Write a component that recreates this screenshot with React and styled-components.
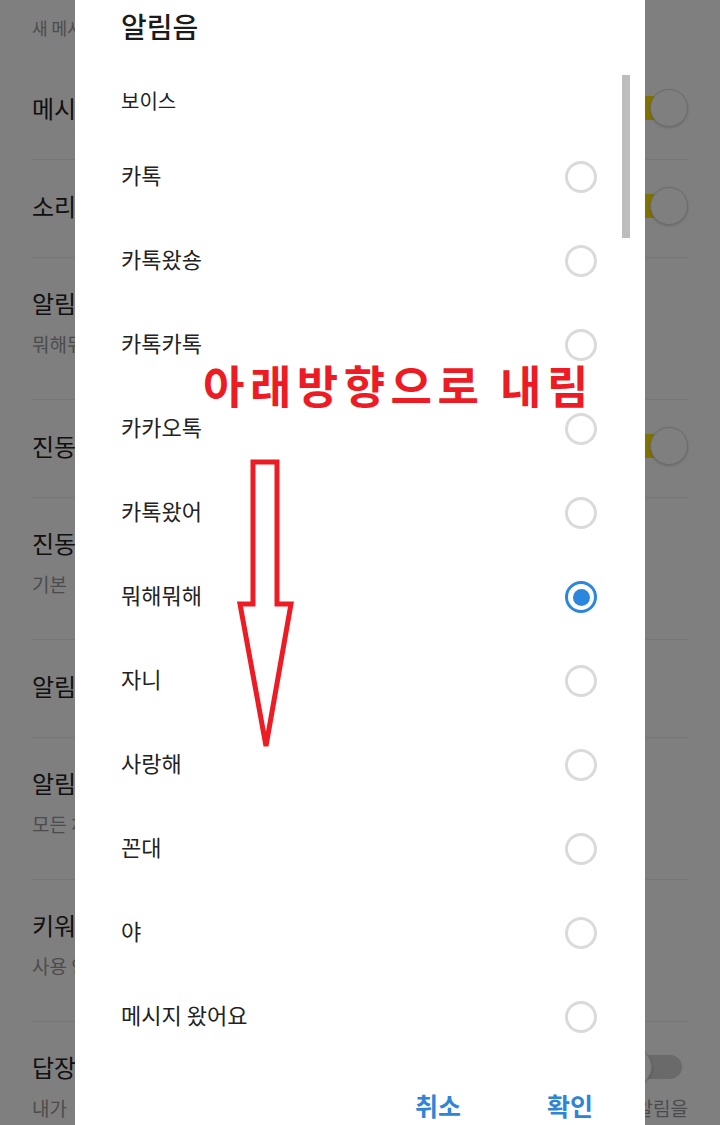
import React from 'react';
import styled, { createGlobalStyle } from 'styled-components';

const GlobalStyle = createGlobalStyle`
  html, body {
    margin: 0;
    padding: 0;
    overflow: hidden;
    background: #fff;
  }
  body {
    font-family: "Noto Sans CJK KR", "Noto Sans", sans-serif;
  }
`;

const Screen = styled.div`
  position: relative;
  width: 720px;
  height: 1125px;
  overflow: hidden;
  background: #fff;
`;

/* settings page behind the dialog */
const Settings = styled.div`
  display: flex;
  flex-direction: column;
`;

const SectionLabel = styled.div`
  box-sizing: border-box;
  height: 62px;
  padding: 14px 32px 0;
  font-size: 17px;
  line-height: 28px;
  color: #999;
`;

const SettingRow = styled.div`
  box-sizing: border-box;
  display: flex;
  flex-direction: column;
  height: ${(p) => (p.$tall ? 142 : 98)}px;
  margin: 0 32px;
  padding-top: ${(p) => (p.$tall ? 26 : 27)}px;
  border-bottom: 1px solid #ececec;
`;

const TopLine = styled.div`
  display: flex;
  align-items: center;
  justify-content: space-between;
  height: 38px;
`;

const RowTitle = styled.span`
  font-size: 24px;
  line-height: 34px;
  color: #222;
`;

const RowSub = styled.div`
  margin-top: 8px;
  font-size: 19px;
  line-height: 28px;
  color: #999;
  text-align: ${(p) => (p.$justify ? 'justify' : 'left')};
  word-break: keep-all;
`;

const Switch = styled.span`
  position: relative;
  width: 74px;
  height: 38px;
  flex-shrink: 0;
`;

const Track = styled.span`
  position: absolute;
  left: 6px;
  right: 6px;
  top: 7px;
  height: 24px;
  border-radius: 12px;
  background: ${(p) => (p.$on ? '#fee500' : '#d4d4d4')};
`;

const Thumb = styled.span`
  position: absolute;
  top: 0;
  left: ${(p) => (p.$on ? 36 : 0)}px;
  box-sizing: border-box;
  width: 38px;
  height: 38px;
  border-radius: 50%;
  background: #fff;
  border: 1px solid #d8d8d8;
  box-shadow: 0 1px 3px rgba(0, 0, 0, 0.18);
`;

const Backdrop = styled.div`
  position: absolute;
  inset: 0;
  background: rgba(0, 0, 0, 0.5);
`;

/* ringtone dialog */
const Dialog = styled.div`
  position: absolute;
  left: 75px;
  top: 0;
  width: 570px;
  display: flex;
  flex-direction: column;
  background: #fff;
`;

const DialogTitle = styled.h2`
  margin: 0;
  padding: 0 46px;
  height: 54px;
  line-height: 52px;
  font-size: 28px;
  font-weight: 500;
  color: #1b1b1b;
`;

const OptionList = styled.div`
  position: relative;
  height: 1005px;
  overflow: hidden;
  padding: 0 48px 0 46px;
`;

const GroupLabel = styled.div`
  padding: 34px 0 21px;
  font-size: 20px;
  line-height: 26px;
  color: #222;
`;

const Option = styled.label`
  display: flex;
  align-items: center;
  justify-content: space-between;
  height: 84px;
  font-size: 22px;
  color: #222;
`;

const OptionName = styled.span`
  margin-top: -6px;
`;

const Radio = styled.span`
  box-sizing: border-box;
  display: flex;
  align-items: center;
  justify-content: center;
  width: 32px;
  height: 32px;
  border-radius: 50%;
  border: 3px solid ${(p) => (p.$checked ? '#2b86de' : '#dadada')};

  &::after {
    content: '';
    display: ${(p) => (p.$checked ? 'block' : 'none')};
    width: 17px;
    height: 17px;
    border-radius: 50%;
    background: #2b86de;
  }
`;

const ScrollThumb = styled.div`
  position: absolute;
  right: 15px;
  top: 21px;
  width: 8px;
  height: 163px;
  background: #bdbdbd;
`;

const Footer = styled.div`
  display: flex;
  justify-content: flex-end;
  align-items: center;
  gap: 86px;
  height: 92px;
  padding-right: 52px;
`;

const FooterButton = styled.button`
  border: none;
  background: none;
  padding: 0;
  font-family: inherit;
  font-size: 25px;
  font-weight: 700;
  color: #2f84d6;
`;

/* red hand-drawn note on top */
const Note = styled.div`
  position: absolute;
  left: 203px;
  top: 362px;
  font-size: 45px;
  font-weight: 700;
  line-height: 46px;
  letter-spacing: 5.5px;
  color: #ed1c24;
  white-space: nowrap;
`;

const ArrowSvg = styled.svg`
  position: absolute;
  left: 230px;
  top: 450px;
`;

const rows = [
  { title: '메시지 알림', on: true },
  { title: '소리', on: true },
  { title: '알림음', sub: '뭐해뭐해' },
  { title: '진동', on: true },
  { title: '진동 패턴', sub: '기본' },
  { title: '알림 팝업' },
  { title: '알림 받을 채팅방', sub: '모든 채팅방' },
  { title: '키워드 알림', sub: '사용 안 함' },
  {
    title: '답장 알림',
    on: false,
    sub: '내가 보낸 메시지에 누군가 답장을 하면 채팅방 알림이 꺼져 있어도 답장 알림을 받습니다.',
    justify: true,
  },
];

const sounds = [
  '카톡',
  '카톡왔숑',
  '카톡카톡',
  '카카오톡',
  '카톡왔어',
  '뭐해뭐해',
  '자니',
  '사랑해',
  '꼰대',
  '야',
  '메시지 왔어요',
];

const App = () => {
  const selected = '뭐해뭐해';
  return (
    <Screen>
      <GlobalStyle />
      <Settings>
        <SectionLabel>새 메시지 알림</SectionLabel>
        {rows.map((r) => (
          <SettingRow key={r.title} $tall={!!r.sub}>
            <TopLine>
              <RowTitle>{r.title}</RowTitle>
              {r.on !== undefined && (
                <Switch>
                  <Track $on={r.on} />
                  <Thumb $on={r.on} />
                </Switch>
              )}
            </TopLine>
            {r.sub && <RowSub $justify={r.justify}>{r.sub}</RowSub>}
          </SettingRow>
        ))}
      </Settings>

      <Backdrop />

      <Dialog>
        <DialogTitle>알림음</DialogTitle>
        <OptionList>
          <GroupLabel>보이스</GroupLabel>
          {sounds.map((s) => (
            <Option key={s}>
              <OptionName>{s}</OptionName>
              <Radio $checked={s === selected} />
            </Option>
          ))}
          <ScrollThumb />
        </OptionList>
        <Footer>
          <FooterButton>취소</FooterButton>
          <FooterButton>확인</FooterButton>
        </Footer>
      </Dialog>

      <Note>아래방향으로 내림</Note>
      <ArrowSvg width="70" height="310" viewBox="0 0 70 310">
        <polygon
          points="23,12 47,12 47,154 61,154 36,296 10,154 23,154"
          fill="none"
          stroke="#ed1c24"
          strokeWidth="5"
          strokeLinejoin="miter"
        />
      </ArrowSvg>
    </Screen>
  );
};

export default App;
